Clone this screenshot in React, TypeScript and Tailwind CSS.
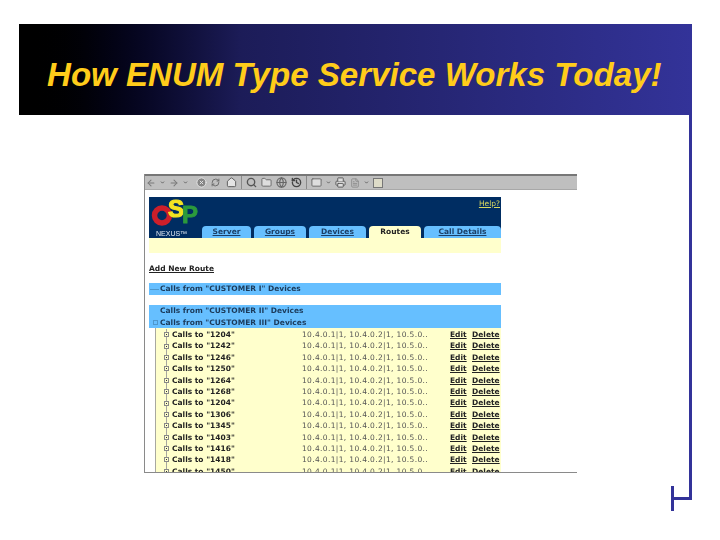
import { ArrowLeft, ArrowRight, ChevronDown, CircleX, RefreshCw, House, Search, Folder, Globe, History, Mail, Printer, FileText } from "lucide-react";

const tabs = [
  { label: "Server", width: "w-[49px]", active: false },
  { label: "Groups", width: "w-[52px]", active: false },
  { label: "Devices", width: "w-[57px]", active: false },
  { label: "Routes", width: "w-[52px]", active: true },
  { label: "Call Details", width: "w-[77px]", active: false },
];

const calls = ["1204", "1242", "1246", "1250", "1264", "1268", "1204", "1306", "1345", "1403", "1416", "1418", "1450"];

function Toolbar() {
  const dropdown = "size-[5px] text-[#555555]";
  return (
    <div className="flex h-[16px] items-center gap-[4px] border-t-2 border-b border-t-[#777777] border-b-[#a8a8a8] bg-[#bfbfbf] pl-px">
      <ArrowLeft className="size-[10px] text-[#7a7a7a]" strokeWidth={2.5} />
      <ChevronDown className={dropdown} strokeWidth={4} />
      <ArrowRight className="size-[10px] text-[#7a7a7a]" strokeWidth={2.5} />
      <ChevronDown className={dropdown} strokeWidth={4} />
      <CircleX className="ml-1 size-[11px] fill-[#858585] text-[#e8e8e8]" strokeWidth={2} />
      <RefreshCw className="size-[9px] text-[#666666]" strokeWidth={2.5} />
      <House className="ml-[2px] size-[11px] fill-[#e4e4e4] text-[#555555]" strokeWidth={2} />
      <div className="h-[13px] w-px bg-[#8a8a8a]" />
      <Search className="size-[11px] text-[#555555]" strokeWidth={3} />
      <Folder className="size-[11px] fill-[#dddddd] text-[#666666]" strokeWidth={2} />
      <Globe className="size-[11px] text-[#666666]" strokeWidth={2.5} />
      <History className="size-[11px] text-[#444444]" strokeWidth={3} />
      <div className="h-[13px] w-px bg-[#8a8a8a]" />
      <Mail className="size-[11px] fill-[#dddddd] text-[#666666]" strokeWidth={2} />
      <ChevronDown className={dropdown} strokeWidth={4} />
      <Printer className="size-[11px] fill-[#dddddd] text-[#555555]" strokeWidth={2} />
      <FileText className="size-[10px] text-[#888888]" strokeWidth={2} />
      <ChevronDown className={dropdown} strokeWidth={4} />
      <div className="size-[10px] border border-[#777777] bg-[#dedcc8]" />
    </div>
  );
}

function Logo() {
  return (
    <svg className="absolute left-0 top-0 overflow-visible" width="54" height="41" viewBox="0 0 54 41">
      <circle cx="13" cy="18.5" r="7.5" fill="none" stroke="#cc1f2a" strokeWidth="5.5" />
      <text x="19" y="20" fontFamily="'Liberation Sans', sans-serif" fontWeight="700" fontSize="24" fill="#f4e422" stroke="#f4e422" strokeWidth="1.2">S</text>
      <text x="33" y="26" fontFamily="'Liberation Sans', sans-serif" fontWeight="700" fontSize="24" fill="#2c9a3c" stroke="#2c9a3c" strokeWidth="0.8">P</text>
      <text x="7" y="39" fontFamily="'Liberation Sans', sans-serif" fontSize="7" fill="#dfe8f2">NEXUS™</text>
    </svg>
  );
}

function BrowserShot() {
  return (
    <div className="h-[299px] w-[433px] overflow-hidden border-b border-l border-[#8a8a8a] bg-white font-['DejaVu_Sans',sans-serif] text-[7.5px] text-[#222222] blur-[0.3px]">
      <Toolbar />
      <div className="ml-[4px] mt-[7px] w-[352px]">
        <div className="relative flex h-[41px] items-end justify-end bg-[#002d62]">
          <Logo />
          <span className="absolute right-[1px] top-[1px] text-[#d8d860] underline">Help?</span>
          <div className="flex gap-[3px]">
            {tabs.map((t) => (
              <div
                key={t.label}
                className={`flex h-[12px] items-center justify-center rounded-t-[4px] font-bold ${t.width} ${t.active ? "bg-[#ffffcc] text-[#222222]" : "bg-[#66bfff] text-[#1c3f66] underline"}`}
              >
                {t.label}
              </div>
            ))}
          </div>
        </div>
        <div className="h-[15px] bg-[#ffffcc]" />
        <div className="mt-[11px] h-[10px] font-bold leading-[10px] underline">Add New Route</div>
        <div className="mt-[9px] flex h-[12px] items-center bg-[#66bfff] pl-[1px] font-bold text-[#1b3a5a]">
          <span className="mr-[1px] h-px w-[9px] bg-[#4d97cc]" />
          Calls from "CUSTOMER I" Devices
        </div>
        <div className="mt-[10px] bg-[#66bfff] pl-[11px] font-bold text-[#1b3a5a]">
          <div className="h-[11.5px] leading-[11.5px]">Calls from "CUSTOMER II" Devices</div>
          <div className="relative h-[11.5px] leading-[11.5px]">
            <span className="absolute left-[-7px] top-[3px] size-[5px] border border-[#4d97cc]" />
            Calls from "CUSTOMER III" Devices
          </div>
        </div>
        <div className="ml-[6px] border-l border-[#a8a8a0] bg-[#ffffcc] pb-[2px] pl-[8px] pt-px">
          {calls.map((c, i) => (
            <div key={i} className="flex h-[11.4px] items-center leading-[11.4px]">
              <span className="relative mr-[3px] flex h-full w-[5px] items-center justify-center">
                <span className="absolute inset-y-0 left-[2px] w-px bg-[#a8a8a0]" />
                <span className="relative flex size-[5px] items-center justify-center border border-[#888888] bg-[#ffffcc]">
                  <span className="size-px bg-[#333333]" />
                </span>
              </span>
              <span className="w-[130px] font-bold">Calls to "{c}"</span>
              <span className="w-[148px] whitespace-pre tracking-[0.35px] text-[#555555]">10.4.0.1|1, 10.4.0.2|1, 10.5.0..</span>
              <span className="w-[22px] font-bold underline">Edit</span>
              <span className="font-bold underline">Delete</span>
            </div>
          ))}
        </div>
      </div>
    </div>
  );
}

export default function App() {
  return (
    <div className="relative h-[540px] w-[720px] overflow-hidden bg-white pl-[19px] pt-[24px]">
      <div className="flex h-[91px] w-[673px] items-center bg-gradient-to-r from-black via-[#1c1c58] via-33% to-[#333399] pl-[28px] pt-[11px]">
        <h1 className="whitespace-nowrap font-['Liberation_Sans',sans-serif] text-[33.1px] font-bold italic leading-none text-[#ffcc1a]">How ENUM Type Service Works Today!</h1>
      </div>
      <div className="h-[385px] w-[673px] border-r-[3px] border-[#333399] pl-[125px] pt-[59px]">
        <BrowserShot />
      </div>
      <svg className="absolute left-[670px] top-[484px]" width="24" height="30" viewBox="0 0 24 30">
        <path d="M2.5 2V27" stroke="#333399" strokeWidth="3" fill="none" />
        <path d="M3 14.5H20" stroke="#333399" strokeWidth="3" fill="none" />
      </svg>
    </div>
  );
}
